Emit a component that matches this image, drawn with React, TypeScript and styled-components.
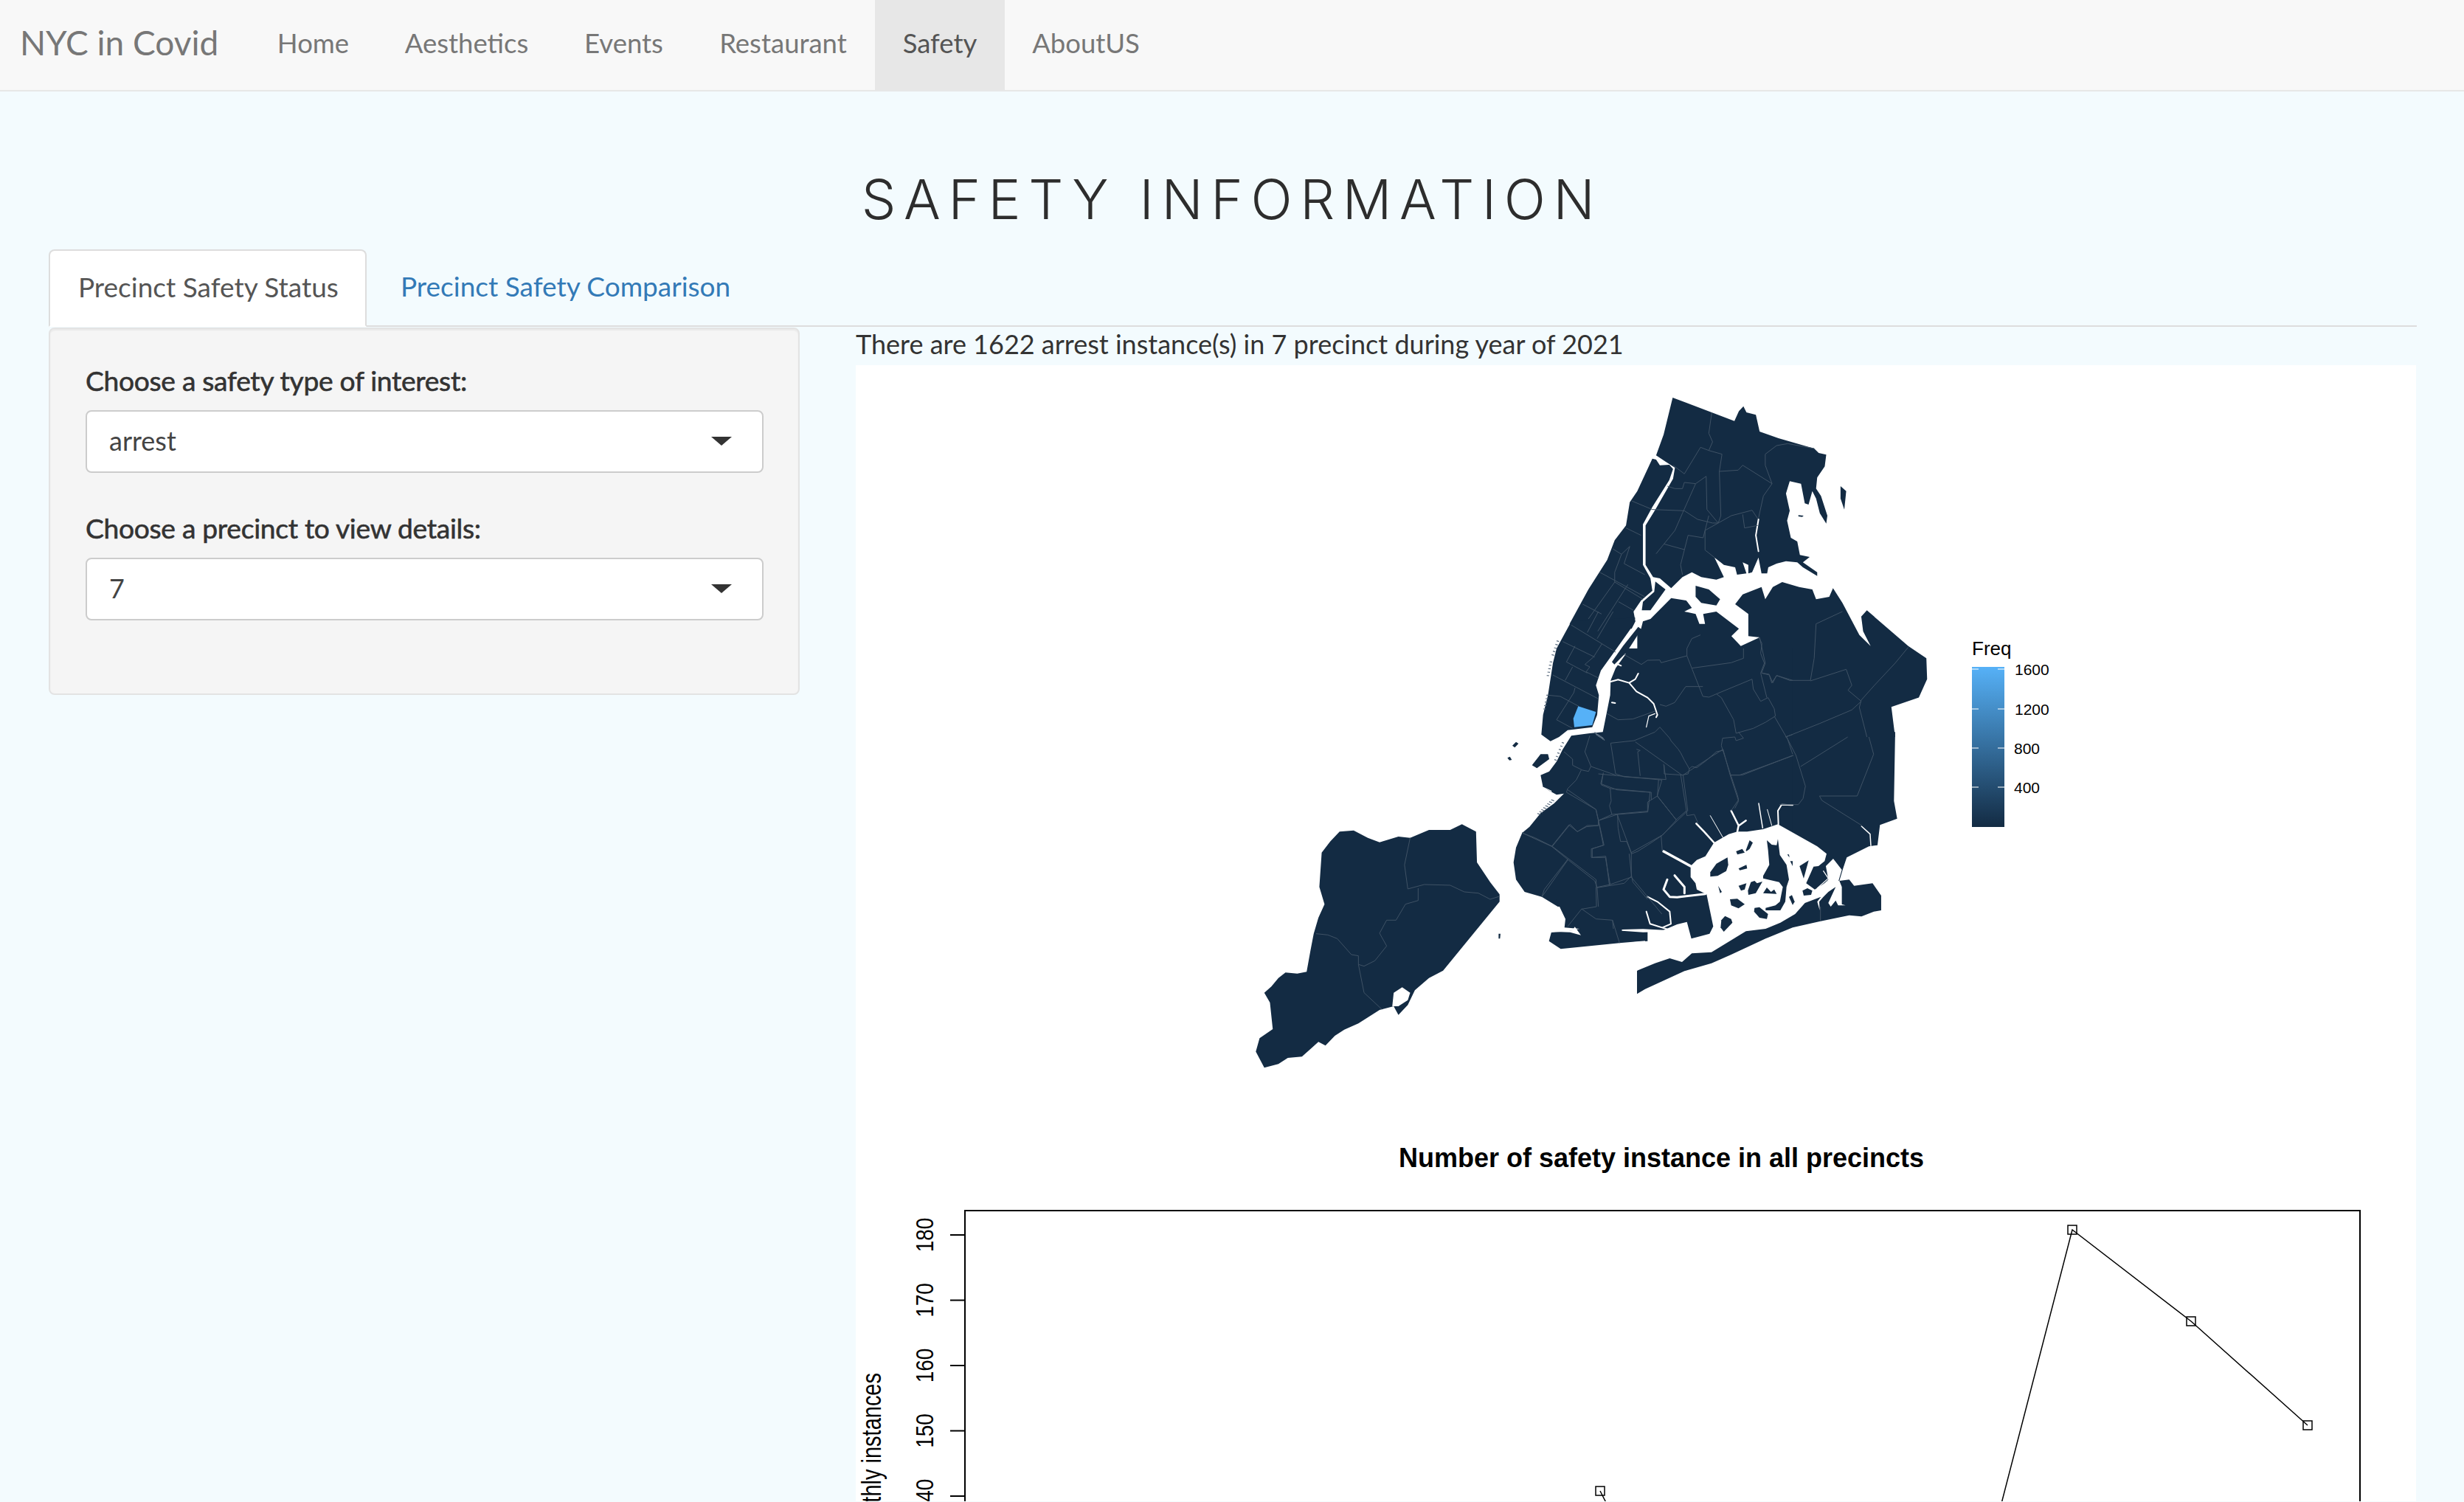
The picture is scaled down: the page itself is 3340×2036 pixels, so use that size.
import React from "react";
import styled, { createGlobalStyle } from "styled-components";

const GlobalStyle = createGlobalStyle`
  html, body { margin: 0; padding: 0; height: 100%; overflow: hidden; background: #f3fbfe; }
  * { box-sizing: border-box; }
  #root { height: 2036px; overflow: hidden; }
`;

const Page = styled.div`
  font-family: "Lato", "Open Sans", sans-serif;
  color: #333;
  height: 2036px;
  background: #f3fbfe;
`;

const Navbar = styled.nav`
  display: flex;
  align-items: stretch;
  height: 124px;
  background: #f8f8f8;
  border-bottom: 2px solid #e7e7e7;
`;

const Brand = styled.a`
  display: flex;
  align-items: center;
  width: 338px;
  padding: 0 0 8px 27px;
  font-size: 46px;
  font-weight: 400;
  color: #777;
`;

const NavItem = styled.a<{ $active?: boolean; $w: number }>`
  display: flex;
  align-items: center;
  justify-content: center;
  width: ${(p) => p.$w}px;
  padding-bottom: 7px;
  font-size: 36.5px;
  font-weight: 400;
  color: ${(p) => (p.$active ? "#555" : "#777")};
  background: ${(p) => (p.$active ? "#e7e7e7" : "transparent")};
`;

const TitleBlock = styled.header`
  display: flex;
  align-items: center;
  justify-content: center;
  height: 214px;
  padding-top: 78px;
`;

const Title = styled.h1`
  margin: 0;
  font-family: "Inter", sans-serif;
  font-size: 74px;
  font-weight: 300;
  letter-spacing: 10.6px;
  color: #2d2d2d;
  line-height: 136px;
`;

const TabBar = styled.div`
  display: flex;
  height: 105px;
  margin: 0 64px 0 66px;
  border-bottom: 2px solid #ddd;
`;

const Tab = styled.a<{ $active?: boolean }>`
  display: flex;
  align-items: center;
  padding: 0 38px 5px 38px;
  height: ${(p) => (p.$active ? "105px" : "103px")};
  width: ${(p) => (p.$active ? "431px" : "auto")};
  margin-right: 6px;
  font-size: 37px;
  font-weight: 400;
  white-space: nowrap;
  color: ${(p) => (p.$active ? "#555" : "#337ab7")};
  background: ${(p) => (p.$active ? "#fff" : "transparent")};
  border: 2px solid ${(p) => (p.$active ? "#ddd" : "transparent")};
  border-bottom-color: ${(p) => (p.$active ? "#fff" : "transparent")};
  border-radius: 8px 8px 0 0;
`;

const Columns = styled.div`
  display: grid;
  grid-template-columns: 1018px 2115px;
  column-gap: 76px;
  margin-left: 66px;
`;

const Well = styled.aside`
  height: 498px;
  margin-top: 1px;
  padding: 48px 48px 0;
  background: #f5f5f5;
  border: 2px solid #e3e3e3;
  border-radius: 8px;
  box-shadow: inset 0 2px 2px rgba(0, 0, 0, 0.05);
`;

const Field = styled.div`
  margin-bottom: 53px;
`;

const Label = styled.div`
  height: 48px;
  margin-bottom: 14px;
  font-size: 37.2px;
  font-weight: 400;
  line-height: 44px;
  color: #333;
  letter-spacing: -0.3px;
  -webkit-text-stroke: 0.6px #333;
`;

const Select = styled.div`
  display: flex;
  align-items: center;
  justify-content: space-between;
  width: 919px;
  height: 85px;
  padding: 0 41px 4px 30px;
  background: #fff;
  border: 2px solid #ccc;
  border-radius: 8px;
  font-size: 36px;
  font-weight: 400;
  color: #444;
`;

const Caret = styled.span`
  width: 0;
  height: 0;
  margin-top: 2px;
  border-style: solid;
  border-width: 12px 14px 0;
  border-color: #333 transparent transparent;
`;

const Output = styled.main`
  display: flex;
  flex-direction: column;
`;

const Sentence = styled.p`
  margin: 0;
  height: 52px;
  font-size: 36px;
  font-weight: 400;
  line-height: 46px;
  color: #333;
  white-space: nowrap;
`;

const Plot = styled.section`
  display: flex;
  flex-direction: column;
  background: #fff;
`;

const Figure = styled.svg`
  display: block;
  width: 2115px;
  font-family: "Liberation Sans", Arial, sans-serif;
`;

const Land = styled.path`
  fill: #132b43;
  stroke: none;
`;

const Water = styled.path`
  fill: #fff;
  stroke: none;
`;

const Channel = styled.path<{ $w: number }>`
  fill: none;
  stroke: #fff;
  stroke-width: ${(p) => p.$w}px;
  stroke-linejoin: round;
  stroke-linecap: round;
  vector-effect: non-scaling-stroke;
`;

const Precinct = styled.path`
  fill: none;
  stroke: #3f5265;
  stroke-width: 1px;
  vector-effect: non-scaling-stroke;
`;

const Pier = styled.path`
  fill: none;
  stroke: #5d6e80;
  stroke-width: 1.2px;
  vector-effect: non-scaling-stroke;
`;

const Highlight = styled.path`
  fill: #56b1f7;
`;

const FA = "translate(2000 500) scale(.5102 .3333)";
const FB = "translate(2030 830) scale(.3333)";
const FC = "translate(1650 1000) scale(.6378 .3333)";
const FD = "translate(2230 1060) scale(.3333)";

const hatch = (x: number, y: number, dx: number, dy: number, n: number, lx: number, ly: number) =>
  Array.from({ length: n }, (_, i) => `M${x + dx * i},${y + dy * i}l${lx},${ly}`).join("");

const landA = [
  "M524,120L688,215 700,175 712,155 720,180 745,190 755,258 805,285 900,327 912,345 932,352 928,400 908,445 905,490 918,520 935,600 932,632 915,590 905,530 895,500 885,555 875,550 865,470 835,460 825,510 835,580 828,620 838,690 855,705 862,760 888,768 870,790 908,830 908,845 870,810 855,790 825,785 800,795 778,810 775,835 760,835 752,770 735,830 725,835 725,800 710,790 720,835 695,840 690,810 660,800 635,770 660,850 640,860 600,850 575,830 550,850 520,895 490,855 472,850 452,800 452,640 478,575 525,450 530,405 505,380 480,355 500,270Z",
  "M470,368L480,372 490,395 515,393 525,410 515,455 470,565 445,635 445,800 465,855 470,905 440,945 420,990 425,1030 415,1060 250,1040 300,900 350,780 370,700 400,640 410,545 430,500Z",
  "M478,868L505,900 465,985 442,985 445,950 475,910Z",
  "M585,885L620,900 650,940 640,965 600,955 585,930Z",
  "M430,1085L440,1060 445,1030 465,1020 520,935 560,945 575,975 555,990 585,1000 595,1040 610,1040 605,1000 640,990 700,1060 680,1090 705,1130 755,1095 725,1090 725,1000 690,960 710,920 760,890 770,940 790,890 815,870 860,890 895,900 905,940 940,930 950,895 975,955 1020,1085 1050,1130 1030,1070 1025,1010 1040,985 1150,1130 1198,1180 1200,1265 1178,1340 1105,1378 1115,1500 430,1500Z",
  "M970,480L985,500 980,575 970,530Z",
  "M858,598L872,600 868,605 858,603Z",
];

const landB = [
  "M300,40L240,150 225,210 205,340 185,420 178,500 215,527 250,510 285,482 385,470 405,420 412,340 400,300 420,240 470,170 552,55 560,25Z",
  "M465,205L510,140 572,62 585,72 525,165 475,215Z",
  "M520,150L520,175 480,230 460,280 458,340 432,470 428,490 375,495 300,505 265,560 240,610 210,650 175,665 185,715 240,745 270,740 230,780 175,820 130,875 100,900 75,960 65,1020 75,1090 110,1140 180,1160 245,1200 1200,1200 1200,150Z",
  "M140,625L175,580 205,580 210,600 160,637Z",
  "M60,545L75,530 85,537 70,553Z",
  "M40,595L50,590 58,603 48,605Z",
];

const landC = [
  "M720,660L740,740 738,775 770,780 745,790 710,795 705,830 730,862 855,838 915,828 920,828 920,660Z",
  "M100,1345L82,1280 90,1225 118,1188 112,1080 100,1040 115,1015 130,980 145,958 170,962 190,955 198,870 205,800 215,735 228,680 217,610 222,470 240,425 260,385 290,380 320,410 345,428 385,405 410,410 450,378 495,378 520,355 550,385 552,510 580,590 600,640 600,670 540,810 480,950 450,980 420,1030 405,1090 385,1130 375,1095 345,1110 300,1165 270,1190 250,1215 230,1255 215,1240 180,1300 150,1305 130,1330Z",
  "M598,800L602,800 601,820 598,820Z",
];

const landD =
  "M0,-200L1017,-200 1012,80 1025,152 955,178 945,260 910,265 820,310 805,355 790,405 830,400 850,425 925,415 960,465 960,525 930,530 880,550 830,545 710,570 600,595 490,640 350,705 270,740 160,772 0,845 -33,865 -33,770 0,750Z";

const bay =
  "M10,612L75,605 130,582 170,572 188,640 262,620 277,590 250,460 210,440 205,415 185,390 185,345 210,320 245,305 280,250 340,215 375,205 415,205 480,195 540,175 700,265 738,295 730,325 705,345 685,347 655,415 690,440 745,405 790,405 800,430 800,500 815,505 785,505 775,485 755,510 745,495 775,430 745,450 725,470 708,490 710,525 700,490 715,470 650,495 610,540 550,575 490,600 410,610 270,695 190,700 150,735 100,720 40,740 -33,770 -60,790 -60,655 10,650Z";

const blob = "M735,345L765,315 800,360 785,410 745,405 715,430 745,400Z";

const islands = [
  "M265,370L290,335 335,310 338,340 330,365 295,385 265,388Z",
  "M410,280L425,240 438,250 425,275 412,285Z",
  "M370,285L395,275 405,290 375,298Z",
  "M495,240L515,258 535,260 540,235 548,300 575,340 585,400 575,430 570,490 550,525 490,525 490,515 530,505 548,490 560,430 545,410 480,395 480,385 505,340 500,280Z",
  "M345,480L375,478 405,500 380,517 350,505Z",
  "M445,515L465,512 500,540 495,560 465,555 443,530Z",
  "M325,548L350,560 355,575 320,612 307,595 310,565Z",
  "M430,410L445,405 455,415 477,408 450,455 420,462 418,445Z",
  "M480,455L495,432 512,450 525,440 535,458Z",
  "M585,470L597,463 608,490 600,503Z",
  "M640,445L660,435 680,445 675,462 645,465Z",
  "M628,345L665,322 645,395Z",
  "M380,425L412,415 405,440 390,445Z",
  "M380,355L412,340 415,355 385,362Z",
  "M297,425L312,450 305,455Z",
  "M590,325L600,325 600,345Z",
  "M578,298L585,298 587,310Z",
];

const linesA =
  "M628,180L620,265 630,300 620,335 598,322 555,430 525,395M620,335L655,350 648,420 698,415 710,395 788,470 765,520 752,610M788,470L770,395 770,350 800,315 830,307 900,327M648,420L652,600 645,630 615,575 613,440 585,470 555,465 550,490 530,490 510,480M585,470L550,590 530,660 480,755M470,575L555,580 590,615 630,630 645,630 680,600 735,578 750,612M710,595L715,650 750,640M620,600L605,690 565,680 545,800 550,840M645,630L610,660 610,740 635,770M500,715L555,738M415,540L470,575M400,650L440,680M365,735L388,757 410,725 395,795 450,840M330,830L450,930M388,757L370,830 370,870 445,940M370,870L300,1020M405,880L325,1070M285,960L335,1000M380,950L420,985M1150,1135L1115,1200 1060,1290 1025,1350 1020,1380 1040,1500M905,1040L975,990M905,1040L900,1180 890,1270 835,1270 800,1250 790,1280 780,1245 760,1240 770,1200 755,1095M890,1272L985,1225 1000,1290 990,1310 1025,1355 1000,1390 915,1445 825,1500";

const linesB =
  "M300,55L480,165M365,85L410,0M405,110L470,0M265,122L395,185M315,140L280,205 365,250M425,130L390,185 355,215 375,225 360,245 410,270M225,258L410,355M305,225L275,280M315,310L310,330 240,440 305,475M205,340L255,345 330,385M515,175L585,215 610,198 660,197 665,208 770,180 770,150 790,110 825,95M770,180L835,345 860,348 890,335 1035,275 1040,315 1070,365 1100,350 1125,395 1130,425 1090,450 1040,475 970,495 960,440 910,350 890,335M790,230L950,208 1000,190 1000,150M1060,100L1075,130 1070,170 1085,210 1070,250 1095,350M1075,250L1105,258 1115,290 1135,260 1200,280M835,305L765,305 720,370 685,385 660,378M445,415L490,440 550,437 640,405M460,535L555,525 640,490 660,470 700,515 705,525 735,560 745,575 760,605 780,640 775,660 750,665 560,530M460,535L480,660 515,672 685,683 675,620M565,560L580,565 570,570 580,668M375,505L355,570 380,630 480,665M270,570L305,600 305,625 345,645 370,650 380,628M340,645L320,685 285,720 280,735 400,805 410,850 465,825 610,812 610,775 650,750 727,848 670,910 610,950 570,975 545,985 525,935 500,935 490,880 488,825M655,683L650,750M430,655L422,705 460,720 625,735 625,765M458,720L462,770 455,790 465,825M745,665L768,810 725,848M768,810L770,830 800,825 815,860M410,850L430,950 385,965 385,1000 440,995 455,1115 405,1123 395,1095 285,1008 220,955 165,930 100,900M410,870L365,870 325,895 290,868 220,955M285,1008L190,1130 180,1160M455,1115L515,1105 545,1075 535,985M545,1075L550,1100 610,1170M405,1123L410,1200M915,565L890,570 850,605 810,635 790,630 780,640M915,515L910,545 945,655 975,745 980,765 950,810M915,515L965,510 970,525 1000,515 980,490M945,665L995,665 1200,585M1125,425L1180,520 1200,580M1170,510L1200,500M665,910L670,975";

const linesC =
  "M410,410L398,520 405,618 440,600 495,603 525,630 555,635 580,660 600,648M427,615L427,665 400,680 380,745 360,745 345,798 360,850 335,910 312,932 300,925 300,890 285,885 255,820 235,805 210,800M300,925L312,1040 350,1108M1210,0L1230,75 1250,200 1245,250 1235,275 1195,275M1225,75L1110,155 1090,155 1108,260 1100,290M1385,0L1395,70 1360,240 1280,240 1285,258 1370,360M1340,0L1240,120M950,115L950,150 990,155 1010,130 1050,80 1075,50 1090,155M990,155L1000,300 945,400 880,470 880,570 945,720M810,150L945,175 935,240 975,335M820,150L815,190 850,215 920,225 915,305 850,315 880,470M745,215L805,295 822,440 795,455 795,490 825,490 835,600 805,612 806,690 775,700 805,740 840,745 855,838M648,390L675,410 712,445 805,580 806,612M712,445L750,355 765,385 785,365 810,360 810,340 850,315M745,500L690,650M775,698L745,770M840,745L842,780M880,570L835,600M1282,690L1282,750";

const navItems: [string, number][] = [
  ["Home", 173],
  ["Aesthetics", 243],
  ["Events", 183],
  ["Restaurant", 249],
  ["Safety", 176],
];

const ticks = [1675, 1763.5, 1852, 1940.5, 2029];
const tickLabels = ["180", "170", "160", "150", "140"];
const markers: [number, number][] = [
  [2169, 2022],
  [2809, 1668],
  [2970, 1792],
  [3128, 1933],
];
const legend: [string, number][] = [
  ["1600", 908],
  ["1200", 962],
  ["800", 1015],
  ["400", 1068],
];

const MapFigure = () => (
  <Figure viewBox="1160 496 2115 984" height={984}>
    <defs>
      <linearGradient id="freq" x1="0" y1="0" x2="0" y2="1">
        <stop offset="0" stopColor="#56b1f7" />
        <stop offset="1" stopColor="#132b43" />
      </linearGradient>
    </defs>
    <g transform={FD}>
      <Land d={landD} />
    </g>
    <g transform={FA}>
      {landA.map((d) => (
        <Land key={d} d={d} />
      ))}
    </g>
    <g transform={FB}>
      {landB.map((d) => (
        <Land key={d} d={d} />
      ))}
    </g>
    <g transform={FC}>
      {landC.map((d) => (
        <Land key={d} d={d} />
      ))}
    </g>
    <g transform={FD}>
      <Water d={bay} />
      <Water d={blob} />
      {islands.map((d) => (
        <Land key={d} d={d} />
      ))}
      <Channel $w={3.5} d="M75,285L185,345" />
      <Channel $w={2.5} d="M208,172L240,205 285,255" />
      <Channel $w={1} d="M265,140L320,235" />
      <Channel $w={2.5} d="M350,120L380,180 375,205M382,180L410,160" />
      <Channel $w={1.5} d="M462,90L478,190" />
      <Channel $w={1} d="M497,115L515,180" />
      <Channel $w={2} d="M600,97L555,95 540,120 542,175" />
      <Channel $w={1.5} d="M880,183L915,215 918,262" />
      <Channel $w={3} d="M245,458L130,472 100,470 75,440 90,400" />
      <Channel $w={3} d="M120,383L160,430 160,455" />
      <Channel $w={2} d="M10,470L50,490 100,530 105,580 70,595M5,530L20,580 100,605" />
      <Channel $w={1.2} d="M725,365L745,395 700,435" />
    </g>
    <g transform={FA}>
      <Channel $w={2} d="M752,615L745,680 752,745" />
      <Precinct d={linesA} />
    </g>
    <g transform={FB}>
      <Channel $w={2} d="M460,285L490,277 535,290 565,325 610,350 635,375 650,420 645,430M535,290L560,275 572,252" />
      <Channel $w={1.2} d="M640,415L615,425 605,470" />
      <Channel $w={1.2} d="M185,715L218,730 210,755 185,755Z" />
      <Channel $w={2} d="M465,370L478,372M490,215L502,220" />
      <Pier d={hatch(250, 122, -5, 14, 5, -10, -3)} />
      <Pier d={hatch(222, 205, -3, 14, 5, -10, -1)} />
      <Pier d={hatch(208, 340, -3, 14, 5, -10, 0)} />
      <Pier d={hatch(270, 535, -6, 14, 6, -9, -3)} />
      <Pier d={hatch(230, 770, -8, 8, 8, -12, -5)} />
      <Pier d={hatch(395, 490, 6, 4, 6, 10, 14)} />
      <Precinct d={linesB} />
      <Highlight d="M328,385L400,408 385,462 312,470 308,435Z" />
    </g>
    <g transform={FC}>
      <Water d="M860,783L905,781 965,787 965,791 905,794 860,788Z" />
      <Water d="M718,792L755,786 760,772 773,806 750,794Z" />
      <Water d="M372,1095L375,1040 393,1018 410,1040 405,1070 385,1095Z" />
      <Precinct d={linesC} />
    </g>
    <text x="2673" y="889" fontSize="26" fill="#000">Freq</text>
    <rect x="2673" y="905" width="44" height="217" fill="url(#freq)" />
    {legend.map(([label, y]) => (
      <g key={label}>
        <path d={`M2673,${y}h9M2708,${y}h9`} stroke="#fff" strokeOpacity=".7" strokeWidth="1.5" />
        <text x={label.length === 4 ? 2731 : 2730} y={y + 7.5} fontSize="21" fill="#000">{label}</text>
      </g>
    ))}
  </Figure>
);

const ChartFigure = () => (
  <Figure viewBox="1160 1480 2115 556" height={556}>
    <text x="2252" y="1583" fontSize="36" fontWeight="700" textAnchor="middle" fill="#000">
      Number of safety instance in all precincts
    </text>
    <rect x="1308" y="1642" width="1891" height="600" fill="none" stroke="#000" strokeWidth="2" />
    {ticks.map((y, i) => (
      <g key={y}>
        <path d={`M1288,${y}H1308`} stroke="#000" strokeWidth="2" />
        <text transform={`translate(1265 ${y}) rotate(-90) scale(1 1.2)`} fontSize="28" textAnchor="middle" fill="#000">
          {tickLabels[i]}
        </text>
      </g>
    ))}
    <text transform="translate(1194 1862) rotate(-90) scale(1 1.25)" fontSize="29" textAnchor="end" fill="#000">
      Monthly instances
    </text>
    <path d="M2169,2022L2197,2077M2707,2062L2809,1668 2970,1792 3128,1933" fill="none" stroke="#000" strokeWidth="1.5" />
    {markers.map(([x, y]) => (
      <rect key={x} x={x - 6} y={y - 6} width="12" height="12" fill="none" stroke="#000" strokeWidth="1.5" />
    ))}
  </Figure>
);

export default function App() {
  return (
    <Page>
      <GlobalStyle />
      <Navbar>
        <Brand>NYC in Covid</Brand>
        {navItems.map(([label, w]) => (
          <NavItem key={label} $w={w} $active={label === "Safety"}>
            {label}
          </NavItem>
        ))}
        <NavItem $w={220}>AboutUS</NavItem>
      </Navbar>
      <TitleBlock>
        <Title>SAFETY INFORMATION</Title>
      </TitleBlock>
      <TabBar>
        <Tab $active>Precinct Safety Status</Tab>
        <Tab>Precinct Safety Comparison</Tab>
      </TabBar>
      <Columns>
        <Well>
          <Field>
            <Label>Choose a safety type of interest:</Label>
            <Select>
              arrest
              <Caret />
            </Select>
          </Field>
          <Field>
            <Label>Choose a precinct to view details:</Label>
            <Select>
              7
              <Caret />
            </Select>
          </Field>
        </Well>
        <Output>
          <Sentence>There are 1622 arrest instance(s) in 7 precinct during year of 2021</Sentence>
          <Plot>
            <MapFigure />
            <ChartFigure />
          </Plot>
        </Output>
      </Columns>
    </Page>
  );
}
